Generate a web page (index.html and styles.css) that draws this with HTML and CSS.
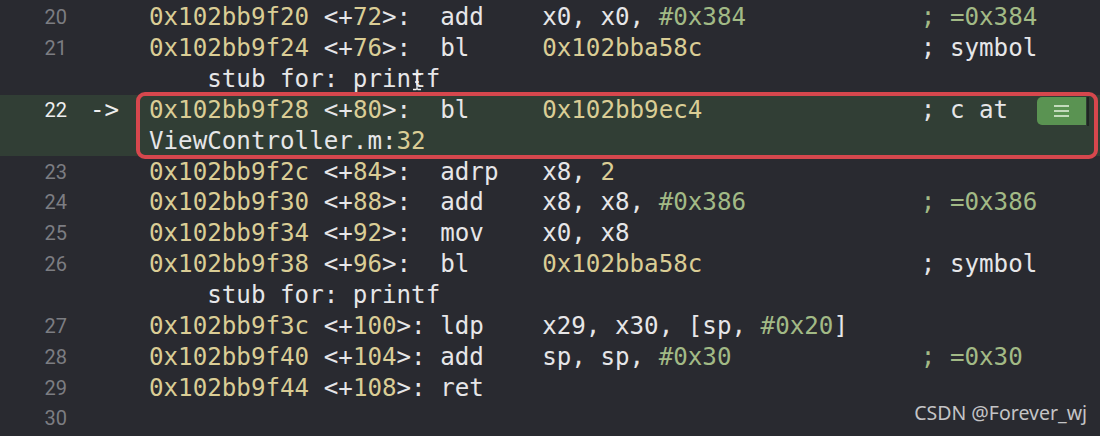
FILE: index.html
```html
<!DOCTYPE html>
<html>
<head>
<meta charset="utf-8">
<link rel="stylesheet" href="styles.css">
</head>
<body>
<div class="editor">
  <div class="row"><span class="ln">20</span><span class="arr"></span><span class="code"><span class="addr"><span class="y">0x102bb9f20</span> &lt;+<span class="y">72</span>&gt;:</span><span class="op">add</span><span class="args">x0, x0, <span class="g">#0x384</span></span><span class="cmt g">; =0x384</span></span></div>
  <div class="row"><span class="ln">21</span><span class="arr"></span><span class="code"><span class="addr"><span class="y">0x102bb9f24</span> &lt;+<span class="y">76</span>&gt;:</span><span class="op">bl</span><span class="args"><span class="y">0x102bba58c</span></span><span class="cmt">; symbol</span></span></div>
  <div class="row"><span class="ln"></span><span class="arr"></span><span class="code"><span class="wrap">stub for: printf</span></span></div>
  <div class="hl">
    <div class="row"><span class="ln cur">22</span><span class="arr">-&gt;</span><span class="code"><span class="addr"><span class="y">0x102bb9f28</span> &lt;+<span class="y">80</span>&gt;:</span><span class="op">bl</span><span class="args"><span class="y">0x102bb9ec4</span></span><span class="cmt">; c at</span></span></div>
    <div class="row"><span class="ln"></span><span class="arr"></span><span class="code">ViewController.m:<span class="y">32</span></span></div>
    <div class="mark"></div>
    <div class="btn"><span></span><span></span><span></span></div>
    <div class="caret"></div>
  </div>
  <div class="row"><span class="ln">23</span><span class="arr"></span><span class="code"><span class="addr"><span class="y">0x102bb9f2c</span> &lt;+<span class="y">84</span>&gt;:</span><span class="op">adrp</span><span class="args">x8, <span class="y">2</span></span></span></div>
  <div class="row"><span class="ln">24</span><span class="arr"></span><span class="code"><span class="addr"><span class="y">0x102bb9f30</span> &lt;+<span class="y">88</span>&gt;:</span><span class="op">add</span><span class="args">x8, x8, <span class="g">#0x386</span></span><span class="cmt g">; =0x386</span></span></div>
  <div class="row"><span class="ln">25</span><span class="arr"></span><span class="code"><span class="addr"><span class="y">0x102bb9f34</span> &lt;+<span class="y">92</span>&gt;:</span><span class="op">mov</span><span class="args">x0, x8</span></span></div>
  <div class="row"><span class="ln">26</span><span class="arr"></span><span class="code"><span class="addr"><span class="y">0x102bb9f38</span> &lt;+<span class="y">96</span>&gt;:</span><span class="op">bl</span><span class="args"><span class="y">0x102bba58c</span></span><span class="cmt">; symbol</span></span></div>
  <div class="row"><span class="ln"></span><span class="arr"></span><span class="code"><span class="wrap">stub for: printf</span></span></div>
  <div class="row"><span class="ln">27</span><span class="arr"></span><span class="code"><span class="addr"><span class="y">0x102bb9f3c</span> &lt;+<span class="y">100</span>&gt;:</span><span class="op">ldp</span><span class="args">x29, x30, [sp, <span class="g">#0x20</span>]</span></span></div>
  <div class="row"><span class="ln">28</span><span class="arr"></span><span class="code"><span class="addr"><span class="y">0x102bb9f40</span> &lt;+<span class="y">104</span>&gt;:</span><span class="op">add</span><span class="args">sp, sp, <span class="g">#0x30</span></span><span class="cmt g">; =0x30</span></span></div>
  <div class="row"><span class="ln">29</span><span class="arr"></span><span class="code"><span class="addr"><span class="y">0x102bb9f44</span> &lt;+<span class="y">108</span>&gt;:</span><span class="op">ret</span></span></div>
  <div class="row"><span class="ln">30</span><span class="arr"></span><span class="code"></span></div>
</div>
<svg class="ibeam" width="10" height="18" viewBox="0 0 10 18"><path d="M1 1.5h3l1 1 1-1h3M5 2.5v13M1 16.5h3l1-1 1 1h3M3 9h4" stroke="#f2f2f2" stroke-width="1.3" fill="none"/></svg>
<div class="wm">CSDN @Forever_wj</div>
</body>
</html>
```
FILE: styles.css
```css
html, body {
  margin: 0;
  padding: 0;
  background: #292a30;
  width: 1100px;
  height: 436px;
  overflow: hidden;
}
body {
  position: relative;
}
.editor {
  padding-top: 2px;
  font-family: "DejaVu Sans Mono", "Liberation Mono", monospace;
  font-size: 24.2px;
  color: #e6e6e8;
}
.row {
  display: grid;
  grid-template-columns: 67px 82px 1fr;
  height: 30.85px;
  align-items: center;
  white-space: pre;
}
.ln {
  font-family: Roboto, "Liberation Sans", sans-serif;
  font-size: 20px;
  color: #7c7d82;
  text-align: right;
}
.ln.cur {
  color: #eeeeee;
}
.arr {
  padding-left: 23px;
  color: #eeeeee;
}
.code {
  display: flex;
}
.addr {
  width: 20ch;
  flex: none;
}
.op {
  width: 7ch;
  flex: none;
}
.args {
  width: 26ch;
  flex: none;
}
.wrap {
  padding-left: 4ch;
}
.y {
  color: #dacd95;
}
.g {
  color: #a2ba86;
}
.hl {
  position: relative;
  background: #313e35;
}
.mark {
  position: absolute;
  left: 136px;
  right: 2px;
  top: -3px;
  bottom: -3px;
  border: 4px solid #d6474d;
  border-radius: 9px;
}
.btn {
  position: absolute;
  left: 1037px;
  top: 2px;
  width: 49px;
  height: 28px;
  background: #5a9352;
  border-radius: 5px 0 0 5px;
  display: flex;
  flex-direction: column;
  align-items: center;
  justify-content: center;
  gap: 3px;
}
.btn span {
  display: block;
  width: 15px;
  height: 2px;
  background: #c3dbbd;
}
.caret {
  position: absolute;
  left: 1087px;
  top: 2px;
  width: 2px;
  height: 29px;
  background: #1f2622;
}
.ibeam {
  position: absolute;
  left: 412px;
  top: 73px;
}
.wm {
  position: absolute;
  right: 13px;
  top: 399px;
  font-family: "Noto Sans", "Open Sans", sans-serif;
  font-size: 19.5px;
  color: #c4c4c6;
}
```
